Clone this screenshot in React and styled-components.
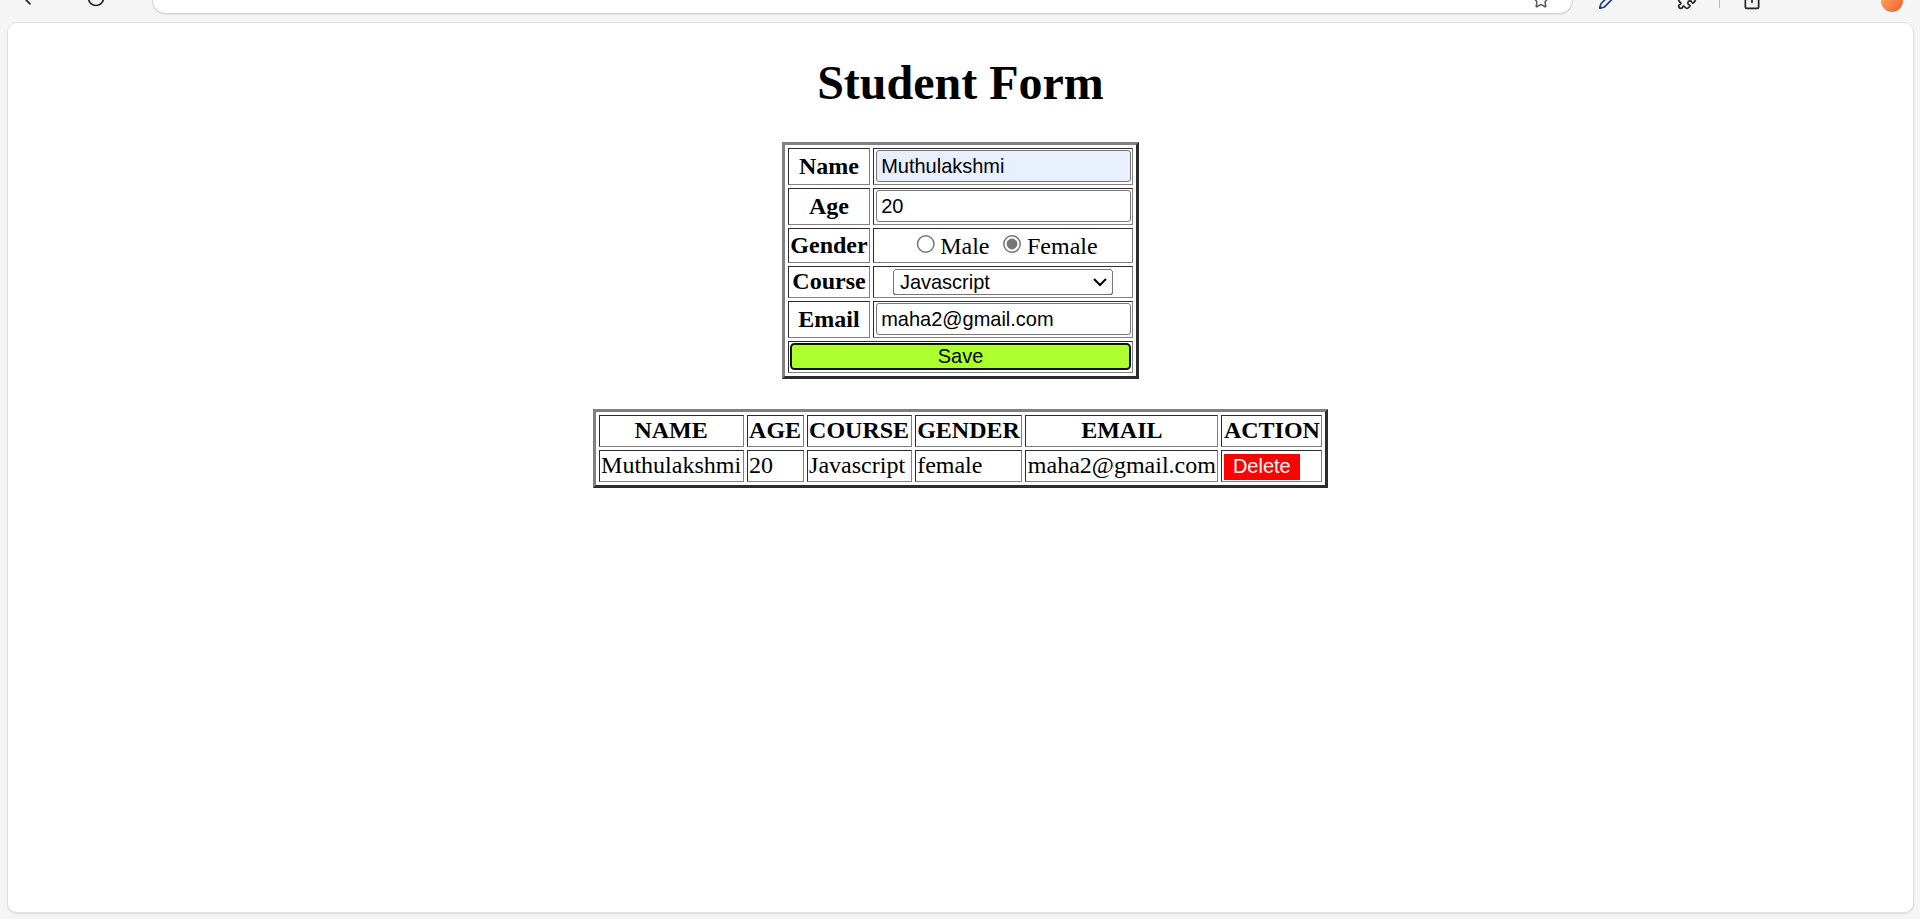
import styled, { createGlobalStyle } from "styled-components";
import { ArrowLeft, RotateCw, Star, Puzzle, Pen, Share } from "lucide-react";

const GlobalStyle = createGlobalStyle`
  html, body {
    margin: 0;
    padding: 0;
    background: #f5f5f5;
    overflow: hidden;
  }
`;

const Frame = styled.div`
  width: 1920px;
  height: 919px;
  display: flex;
  flex-direction: column;
  background: #f5f5f5;
`;

const TopBar = styled.div`
  height: 22px;
  flex: none;
  display: flex;
  align-items: flex-start;
  overflow: hidden;
`;

const NavIcons = styled.div`
  width: 152px;
  box-sizing: border-box;
  flex: none;
  display: flex;
  gap: 46px;
  padding-left: 20px;
  margin-top: -12px;
  color: #222;
`;

const AddressBar = styled.div`
  width: 1421px;
  height: 14px;
  flex: none;
  background: #fff;
  border: 1px solid #d4d4d4;
  border-top: none;
  border-radius: 0 0 18px 18px;
  box-shadow: 0 1px 1px rgba(0, 0, 0, 0.08);
  display: flex;
  justify-content: flex-end;
  padding-right: 22px;
  box-sizing: border-box;
  color: #555;
  svg {
    margin-top: -9px;
  }
`;

const ToolIcons = styled.div`
  flex: 1;
  display: flex;
  align-items: flex-start;
  margin-top: -10px;
  color: #222;
`;

const ToolIcon = styled.span`
  display: flex;
  margin-left: ${(p) => p.$ml}px;
  color: ${(p) => p.$color || "#222"};
`;

const Divider = styled.span`
  width: 1px;
  height: 18px;
  margin-left: 22px;
  background: #bbb;
`;

const Avatar = styled.span`
  margin-left: auto;
  margin-right: 17px;
  width: 22px;
  height: 22px;
  border-radius: 50%;
  background: linear-gradient(135deg, #ffb36b, #f25a2c);
`;

const Card = styled.div`
  flex: 1;
  margin: 0 6px 6px 7px;
  background: #fff;
  border: 1px solid #e2e2e2;
  border-radius: 10px;
  box-shadow: 0 1px 2px rgba(0, 0, 0, 0.1);
  overflow: hidden;
`;

const Page = styled.div`
  zoom: 1.5;
  padding: 0 8px;
  font-family: "Liberation Serif", "Times New Roman", serif;
  font-size: 16px;
  color: #000;
`;

const Title = styled.h1`
  font-size: 32px;
  font-weight: bold;
  text-align: center;
  margin: 21px 0 21.5px;
`;

const Table = styled.table`
  margin: ${(p) => (p.$gap ? "20px" : "0")} auto 0;
  border: 2px outset grey;
  border-spacing: 2px;
`;

const Label = styled.th`
  border: 1px inset grey;
  padding: 1px;
  font-weight: bold;
`;

const Field = styled.td`
  border: 1px inset grey;
  padding: 1px;
  text-align: ${(p) => (p.$left ? "left" : "center")};
`;

const TextInput = styled.input`
  font-family: "Liberation Sans", Arial, sans-serif;
  font-size: 13.333px;
  width: 170px;
  height: 21.33px;
  box-sizing: border-box;
  padding: 2px 3px;
  border: 1px solid #767676;
  border-radius: 2px;
  background-color: ${(p) => (p.$autofill ? "#e8f0fe" : "#fff")};
  color: #000;
  display: block;
`;

const Radio = styled.input`
  accent-color: #777;
  margin: 3px 3px 0 5px;
`;

const Select = styled.select`
  font-family: "Liberation Sans", Arial, sans-serif;
  font-size: 13.333px;
  width: 147px;
`;

const SaveButton = styled.button`
  width: 100%;
  display: block;
  font-family: "Liberation Sans", Arial, sans-serif;
  font-size: 13.333px;
  background: greenyellow;
  color: #000;
  border: 1.5px solid #111;
  border-radius: 3px;
  padding: 0 6px;
`;

const DeleteButton = styled.button`
  font-family: "Liberation Sans", Arial, sans-serif;
  font-size: 13.333px;
  background: red;
  color: #fff;
  border: none;
  padding: 1px 6px;
`;

const students = [
  { name: "Muthulakshmi", age: "20", course: "Javascript", gender: "female", email: "maha2@gmail.com" },
];

export default function App() {
  return (
    <Frame>
      <GlobalStyle />
      <TopBar>
        <NavIcons>
          <ArrowLeft size={20} />
          <RotateCw size={20} />
        </NavIcons>
        <AddressBar>
          <Star size={18} />
        </AddressBar>
        <ToolIcons>
          <ToolIcon $ml={25} $color="#1a3a8a">
            <Pen size={20} />
          </ToolIcon>
          <ToolIcon $ml={59}>
            <Puzzle size={20} />
          </ToolIcon>
          <Divider />
          <ToolIcon $ml={22}>
            <Share size={20} />
          </ToolIcon>
          <Avatar />
        </ToolIcons>
      </TopBar>
      <Card>
        <Page>
          <Title>Student Form</Title>
          <Table>
            <tbody>
              <tr>
                <Label>Name</Label>
                <Field>
                  <TextInput $autofill defaultValue="Muthulakshmi" />
                </Field>
              </tr>
              <tr>
                <Label>Age</Label>
                <Field>
                  <TextInput defaultValue="20" />
                </Field>
              </tr>
              <tr>
                <Label>Gender</Label>
                <Field>
                  <Radio type="radio" name="gender" value="male" />
                  Male&nbsp;
                  <Radio type="radio" name="gender" value="female" defaultChecked />
                  Female
                </Field>
              </tr>
              <tr>
                <Label>Course</Label>
                <Field>
                  <Select defaultValue="Javascript">
                    <option>Javascript</option>
                    <option>Python</option>
                    <option>Java</option>
                    <option>React</option>
                  </Select>
                </Field>
              </tr>
              <tr>
                <Label>Email</Label>
                <Field>
                  <TextInput defaultValue="maha2@gmail.com" />
                </Field>
              </tr>
              <tr>
                <Field colSpan={2}>
                  <SaveButton>Save</SaveButton>
                </Field>
              </tr>
            </tbody>
          </Table>

          <Table $gap>
            <tbody>
              <tr>
                <Label>NAME</Label>
                <Label>AGE</Label>
                <Label>COURSE</Label>
                <Label>GENDER</Label>
                <Label>EMAIL</Label>
                <Label>ACTION</Label>
              </tr>
              {students.map((s) => (
                <tr key={s.email}>
                  <Field $left>{s.name}</Field>
                  <Field $left>{s.age}</Field>
                  <Field $left>{s.course}</Field>
                  <Field $left>{s.gender}</Field>
                  <Field $left>{s.email}</Field>
                  <Field $left>
                    <DeleteButton>Delete</DeleteButton>
                  </Field>
                </tr>
              ))}
            </tbody>
          </Table>
        </Page>
      </Card>
    </Frame>
  );
}
